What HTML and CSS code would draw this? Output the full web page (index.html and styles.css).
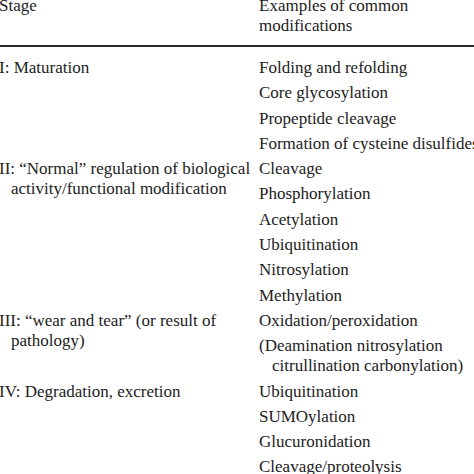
FILE: index.html
```html
<!DOCTYPE html>
<html lang="en">
<head>
<meta charset="utf-8">
<title>Stages of protein modification</title>
<link rel="stylesheet" href="styles.css">
</head>
<body>
<div class="table">
  <div class="head">
    <div class="cell">Stage</div>
    <div class="cell">Examples of common<br>modifications</div>
  </div>
  <div class="body">
    <div class="row">
      <div class="cell stage">I: Maturation</div>
      <ul class="mods">
        <li>Folding and refolding</li>
        <li>Core glycosylation</li>
        <li>Propeptide cleavage</li>
        <li>Formation of cysteine disulfides</li>
      </ul>
    </div>
    <div class="row">
      <div class="cell stage">II: “Normal” regulation of biological activity/functional modification</div>
      <ul class="mods">
        <li>Cleavage</li>
        <li>Phosphorylation</li>
        <li>Acetylation</li>
        <li>Ubiquitination</li>
        <li>Nitrosylation</li>
        <li>Methylation</li>
      </ul>
    </div>
    <div class="row">
      <div class="cell stage">III: “wear and tear” (or result of pathology)</div>
      <ul class="mods">
        <li>Oxidation/peroxidation</li>
        <li>(Deamination nitrosylation citrullination carbonylation)</li>
      </ul>
    </div>
    <div class="row">
      <div class="cell stage">IV: Degradation, excretion</div>
      <ul class="mods">
        <li>Ubiquitination</li>
        <li>SUMOylation</li>
        <li>Glucuronidation</li>
        <li>Cleavage/proteolysis</li>
      </ul>
    </div>
  </div>
</div>
</body>
</html>
```

FILE: styles.css
```css
html, body {
  margin: 0;
  padding: 0;
  background: #ffffff;
  overflow: hidden;
}

body {
  font-family: "Liberation Serif", "Times New Roman", serif;
  font-size: 17px;
  line-height: 20px;
  color: #222222;
}

.table {
  width: 510px;
  margin-top: -4px;
  margin-left: -1px;
}

.head {
  display: grid;
  grid-template-columns: 260px 250px;
  padding-bottom: 9px;
  border-bottom: 2px solid #2a2a2a;
}

.body {
  padding-top: 11px;
  display: flex;
  flex-direction: column;
  gap: 5.3px;
}

.row {
  display: grid;
  grid-template-columns: 260px 250px;
}

.stage {
  padding-left: 12px;
  text-indent: -12px;
  padding-right: 6px;
}

.mods {
  list-style: none;
  margin: 0;
  padding: 0;
  display: flex;
  flex-direction: column;
  gap: 5.3px;
}

.mods li {
  padding-left: 13px;
  text-indent: -13px;
  padding-right: 20px;
}
```
